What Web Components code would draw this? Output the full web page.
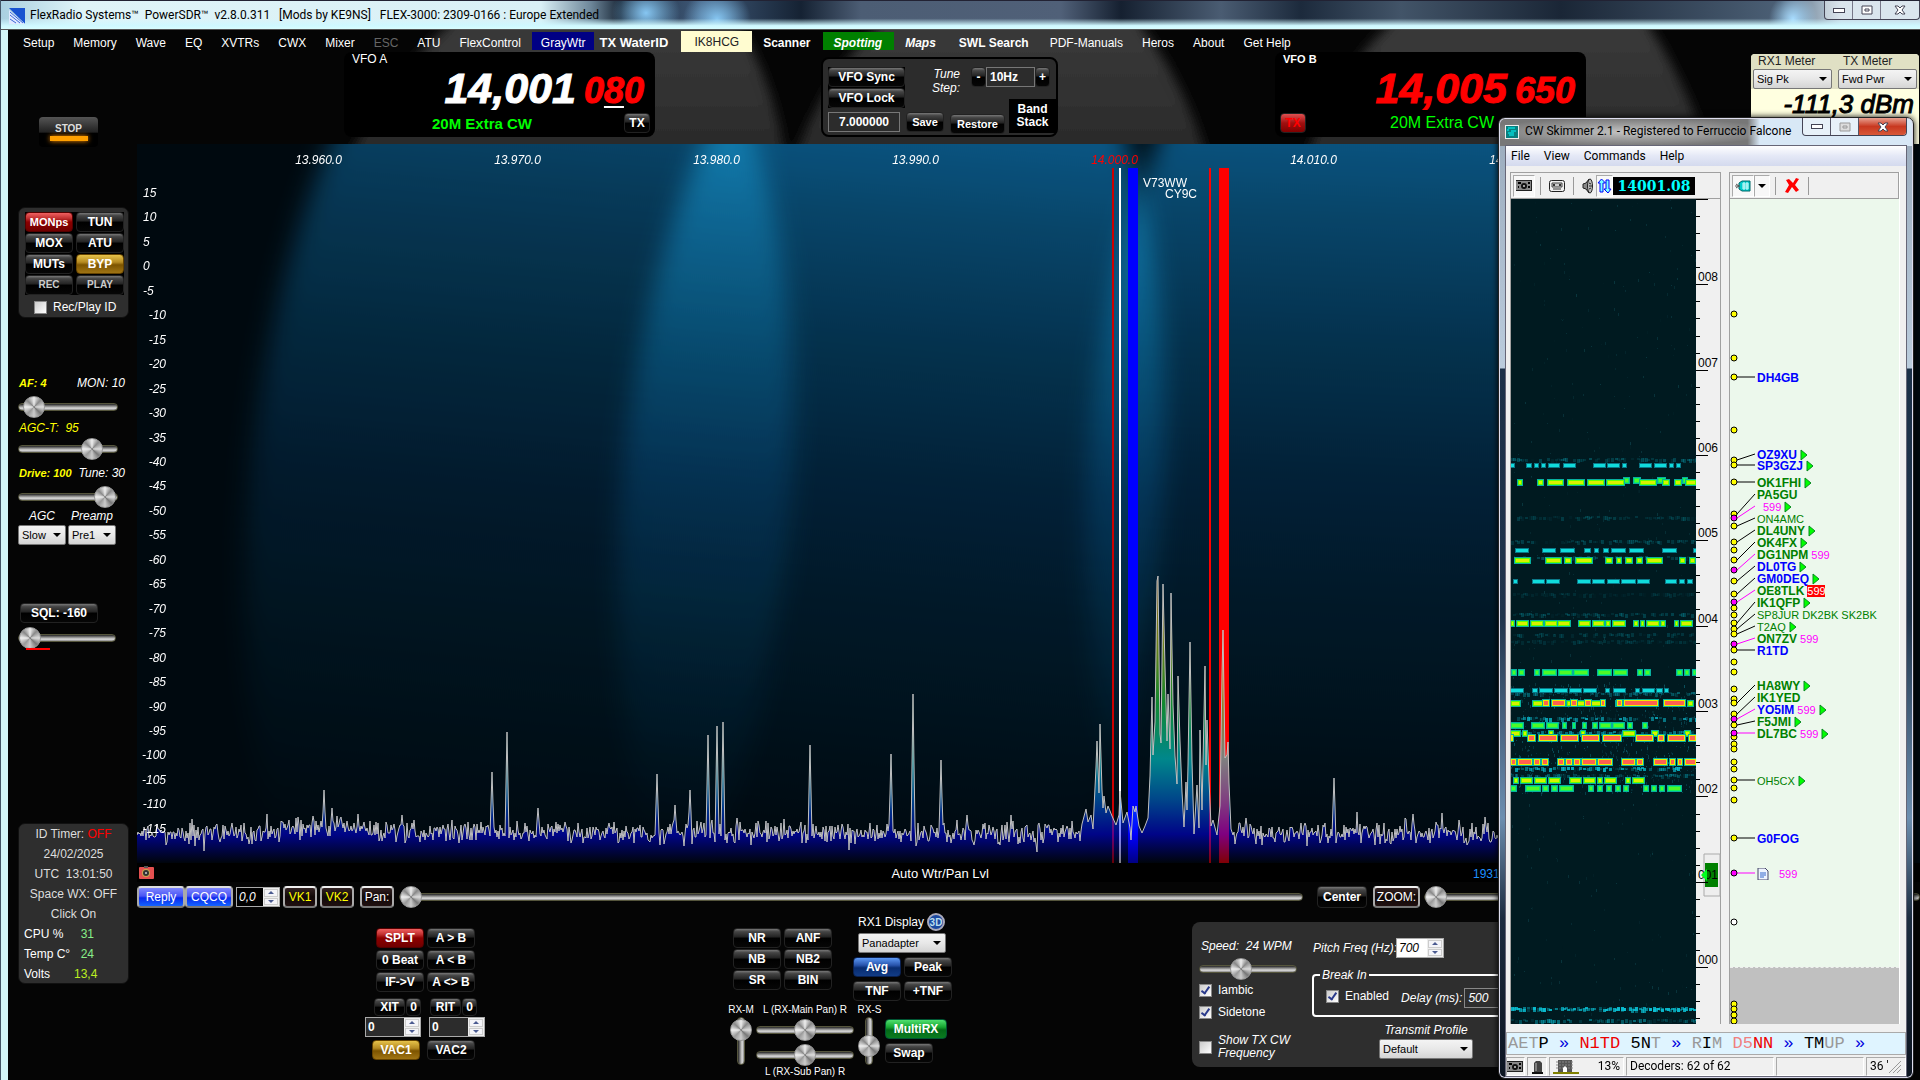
<!DOCTYPE html>
<html lang="en">
<head>
<meta charset="utf-8">
<title>PowerSDR</title>
<style>
  html, body { margin: 0; height: 100%; background: #050505; overflow: hidden; }
  body { font-family: "Liberation Sans", Arial, sans-serif; font-size: 12px; color: #fff; }
</style>
</head>
<body>
<sdr-window></sdr-window>
<cw-skimmer></cw-skimmer>

<script>
const reset = `
  * { box-sizing: border-box; }
  button, input, select { font: inherit; color: inherit; margin: 0; }
  a { color: inherit; text-decoration: none; }
  svg { display: block; }
`;

class Base extends HTMLElement {
  constructor() {
    super();
    this.attachShadow({ mode: "open" });
  }
  connectedCallback() {
    this.shadowRoot.innerHTML = `<style>${reset}${this.css}</style>${this.html}`;
    this.ready();
  }
  get css() { return ""; }
  get html() { return ""; }
  ready() {}
}

// repeatable noise for the traces
function random(seed) {
  return () => {
    seed = (seed * 1664525 + 1013904223) % 4294967296;
    return seed / 4294967296;
  };
}

/* ---------- controls ---------- */

class SdrButton extends Base {
  get css() {
    return `
      :host { display: block; width: 48px; height: 20px; flex: none; }
      button { width: 100%; height: 100%; padding: 0; border: 1px solid #222; border-radius: 4px;
        font-weight: bold; font-size: 12px; line-height: 14px; color: #fff; white-space: nowrap;
        background: linear-gradient(#777 0, #444 15%, #222 45%, #000 50%, #060606 100%); }
      :host([small]) button { font-size: 11px; }
      :host([tone=grey]) button { font-size: 10px; color: #ccc; }
      :host([tone=red]) button { background: linear-gradient(#f06060, #c03030 30%, #8c0000 50%, #700000); border-color: #500; }
      :host([tone=gold]) button { background: linear-gradient(#e6c24a, #b58a22 40%, #7c5400 55%, #a07414); border-color: #654300; }
      :host([tone=blue]) button { background: linear-gradient(#5c98f4, #2854ac 40%, #082c70 55%, #123c86); border-color: #0a2050; }
      :host([tone=green]) button { background: linear-gradient(#50e070, #16a530 40%, #046a18 55%, #0a7c20); border-color: #053; }
      :host([tone=tx]) button { color: #f00; background: linear-gradient(#e05050, #a01010 50%, #800000); }
      :host([tone=call]) button { background: linear-gradient(#7f86ff, #4a55f4 45%, #0a28ec 55%, #1464ff); border: 2px solid #bbb; border-color: #ddd #aaa #777; font-weight: normal; }
      :host([tone=key]) button { background: linear-gradient(#332222, #100808 50%, #201010); border: 2px solid #bbb; border-color: #eee #aaa #777; font-weight: normal; }
      :host([yellow]) button { color: #ff0; }
    `;
  }
  get html() { return `<button type="button"><slot></slot></button>`; }
}
customElements.define("sdr-button", SdrButton);

class SdrSlider extends Base {
  get css() {
    const knob = `-webkit-appearance: none; width: 22px; height: 22px; border-radius: 50%; border: 1px solid #999;
      background: conic-gradient(#eee, #888 12%, #ddd 25%, #777 37%, #ccc 50%, #999 62%, #eee 75%, #888 87%, #eee);`;
    return `
      :host { display: block; height: 22px; }
      input { -webkit-appearance: none; appearance: none; display: block; width: 100%; height: 22px; background: none; }
      input::-webkit-slider-runnable-track { height: 8px; border-radius: 4px; border: 1px solid #55553c;
        background: linear-gradient(#222, #777 30%, #ddd 70%, #888); }
      input::-webkit-slider-thumb { ${knob} margin-top: -8px; }
      :host([upright]) { width: 22px; height: 48px; }
      :host([upright]) input { writing-mode: vertical-lr; width: 22px; height: 100%; }
      :host([upright]) input::-webkit-slider-runnable-track { width: 8px; height: 100%;
        background: linear-gradient(90deg, #222, #777 30%, #ddd 70%, #888); }
      :host([upright]) input::-webkit-slider-thumb { margin: 0 0 0 -8px; }
    `;
  }
  get html() {
    return `<input type="range" min="0" max="100" value="${this.getAttribute("value")}" aria-label="${this.getAttribute("label")}">`;
  }
}
customElements.define("sdr-slider", SdrSlider);

class SdrSelect extends Base {
  get css() {
    return `
      :host { display: block; position: relative; height: 20px; color: #000; font-size: 11px; }
      select { -webkit-appearance: none; appearance: none; width: 100%; height: 100%; padding: 0 3px; border: 1px solid #777;
        border-radius: 2px; background: linear-gradient(#f4f4f4, #e8e8e8 50%, #d4d4d4); }
      :host::after { content: ""; position: absolute; right: 5px; top: 8px; border: 4px solid transparent; border-top-color: #000; pointer-events: none; }
    `;
  }
  get html() {
    return `<select aria-label="${this.getAttribute("label")}"><option>${this.getAttribute("value")}</option></select>`;
  }
}
customElements.define("sdr-select", SdrSelect);

class SdrSpin extends Base {
  get css() {
    return `
      :host { display: flex; height: 20px; border: 1px solid #aaa; background: #2c2c2c; }
      input { flex: 1; min-width: 0; border: 0; padding: 0 2px; background: none; font-size: 12px; }
      :host([dark]) { background: #000; font-style: italic; }
      :host([light]) { background: #fff; color: #000; font-style: italic; }
      div { display: flex; flex-direction: column; width: 16px; background: #eee; padding: 1px; gap: 1px; }
      button { flex: 1; padding: 0; border: 1px solid #ccc; background: #f4f4f8; display: grid; place-items: center; min-height: 0; }
    `;
  }
  get html() {
    return `
      <input type="text" value="${this.getAttribute("value")}" aria-label="${this.getAttribute("label")}">
      <div>
        <button type="button" aria-label="Up"><svg width="6" height="3"><path d="M0 3L3 0L6 3z" fill="#4a5a90"/></svg></button>
        <button type="button" aria-label="Down"><svg width="6" height="3"><path d="M0 0L3 3L6 0z" fill="#4a5a90"/></svg></button>
      </div>`;
  }
}
customElements.define("sdr-spin", SdrSpin);

class SdrCheck extends Base {
  get css() {
    return `
      :host { display: block; font-size: 12px; line-height: 13px; }
      label { display: flex; align-items: center; gap: 6px; }
      input { -webkit-appearance: none; appearance: none; width: 13px; height: 13px; flex: none; border: 1px solid #888;
        background: linear-gradient(135deg, #ccc, #fff); display: grid; place-items: center; }
      input:checked::after { content: ""; width: 3px; height: 7px; border: solid #2a3a8c; border-width: 0 2px 2px 0; rotate: 35deg; margin-top: -2px; }
    `;
  }
  get html() {
    return `<label><input type="checkbox" ${this.hasAttribute("on") ? "checked" : ""}><span><slot></slot></span></label>`;
  }
}
customElements.define("sdr-check", SdrCheck);

/* ---------- top of the radio window ---------- */

class SdrTitle extends Base {
  get css() {
    return `
      :host { display: flex; align-items: flex-start; height: 30px; color: #000; border-top: 1px solid #223;
        font: 12px Roboto, sans-serif;
        background:
          linear-gradient(transparent 60%, #cff8ff 85%, #d8fdff 96%, #555 97%),
          radial-gradient(ellipse 34px 30px at 716px 18px, #86c6f2, transparent),
          radial-gradient(ellipse 34px 30px at 645px 12px, #86c6f2, transparent),
          radial-gradient(ellipse 24px 26px at 1792px 18px, #a8dcff, transparent),
          linear-gradient(90deg, #a9cfe0, #dff4f8 80px, #d9f0f6 540px, #6d8699 590px, #182636 620px, #405a7a 700px, #152233 800px, #4c5d74 860px, #506078 1060px, #152030 1120px, #4a5c72 1220px, #1c2a3c 1300px, #425468 1400px, #1a2636 1560px, #4c6076 1780px, #c8d8e4 1840px); }
      svg { margin: 7px 5px 0 8px; }
      span { line-height: 28px; flex: 1; white-space: pre; }
      nav { display: flex; border: 1px solid #445; border-top: 0; border-radius: 0 0 4px 4px; background: #ffffff55; }
      button { width: 28px; height: 18px; border: 0; border-right: 1px solid #778; background: none; padding: 0; display: grid; place-items: center; }
      button svg { margin: 0; }
      button:last-child { width: 38px; border: 0; }
    `;
  }
  get html() {
    return `
      <svg width="16" height="16"><path fill="#1852d0" d="M0 0h16v16z"/><path fill="#dfe9ff" d="M0 2l16 14H0z"/><path d="M1 7l10 8M1 11l6 4M1 4l13 11" stroke="#3c68d8"/></svg>
      <span>FlexRadio Systems™  PowerSDR™  v2.8.0.311   [Mods by KE9NS]   FLEX-3000: 2309-0166 : Europe Extended</span>
      <nav>
        <button aria-label="Minimize"><svg width="12" height="5"><rect x=".5" y=".5" width="11" height="4" fill="#fff" stroke="#445"/></svg></button>
        <button aria-label="Maximize"><svg width="12" height="10"><path d="M1 1h10v8H1zM4 4h4v2H4z" fill="#fff" stroke="#445"/></svg></button>
        <button aria-label="Close"><svg width="12" height="10"><path d="M1 1h3l2 2 2-2h3L8 5l3 4H8L6 7 4 9H1l3-4z" fill="#fff" stroke="#445"/></svg></button>
      </nav>`;
  }
}
customElements.define("sdr-title", SdrTitle);

class SdrMenu extends Base {
  get css() {
    return `
      :host { display: flex; height: 22px; padding-left: 6px; }
      a { padding: 0 10px 0 9px; height: 18px; line-height: 22px; margin-top: 2px; white-space: nowrap; flex: none; }
      a.dim { color: #666; }
      a.b { font-weight: bold; font-size: 12px; padding: 0 12px 0 11px; }
      a.navy { background: #000084; margin-left: 1px; padding: 0 9px; }
      a.wide { padding: 0 5px; width: 87px; font-size: 13px; }
      a.cream { background: #fffcd0; color: #222; padding: 0 13px; height: 21px; margin-top: 1px; }
      a.green { background: #008000; }
      a.i { font-style: italic; }
    `;
  }
  get html() {
    const items = [["Setup"], ["Memory"], ["Wave"], ["EQ"], ["XVTRs"], ["CWX"], ["Mixer"], ["ESC", "dim"], ["ATU"], ["FlexControl"],
      ["GrayWtr", "navy"], ["TX WaterID", "b wide"], ["IK8HCG", "cream"], ["Scanner", "b"], ["Spotting", "b i green"], ["Maps", "b i"],
      ["SWL Search", "b"], ["PDF-Manuals"], ["Heros"], ["About"], ["Get Help"]];
    return items.map(([text, cls]) => `<a href="#" class="${cls || ""}">${text}</a>`).join("");
  }
}
customElements.define("sdr-menu", SdrMenu);

class SdrVfo extends Base {
  get css() {
    return `
      :host { display: block; width: 311px; height: 85px; border-radius: 8px; background: #000; padding: 0 11px 0 8px; flex: none; }
      .name { line-height: 14px; font-size: 12px; height: 14px; }
      .freq { display: flex; justify-content: flex-end; align-items: baseline; gap: 8px; height: 45px; line-height: 45px;
        font-weight: bold; font-style: italic; font-size: 43px; -webkit-text-stroke: 1px; }
      .freq small { font-size: 36px; color: #f00; }
      u { text-decoration-color: #fff; text-decoration-thickness: 2px; text-underline-offset: 3px; text-decoration-skip-ink: none; }
      .row { display: flex; align-items: center; margin: 1px -6px 0 80px; height: 22px; color: #0f0; font-size: 15px; font-weight: bold; }
      .row sdr-button { width: 26px; margin-left: auto; }
      :host([sub]) .name { font-weight: bold; font-size: 11px; }
      :host([sub]) .freq { color: #f00; }
      :host([sub]) .row { margin-left: -3px; font-weight: normal; font-size: 16px; gap: 84px; }
      :host([sub]) .row sdr-button { order: -1; margin-left: 0; }
    `;
  }
  get html() {
    const sub = this.hasAttribute("sub");
    return `
      <div class="name">VFO ${sub ? "B" : "A"}</div>
      <div class="freq"><span>${this.getAttribute("mhz")}</span><small>${sub ? this.getAttribute("hz") : "0<u>8</u>0"}</small></div>
      <div class="row"><span>20M Extra CW</span><sdr-button ${sub ? 'tone="tx"' : ""}>TX</sdr-button></div>`;
  }
}
customElements.define("sdr-vfo", SdrVfo);

class SdrTuning extends Base {
  get css() {
    return `
      :host { display: block; width: 237px; height: 80px; margin-top: 5px; padding: 8px 0 0 5px; border: 2px solid #000; border-radius: 8px; background: #2c2c2c; flex: none; }
      .top, .low { display: flex; }
      .stack { display: grid; gap: 1px; background: #000; }
      .stack sdr-button { width: 77px; }
      label { font-style: italic; width: 29px; line-height: 14px; text-align: right; margin-left: 26px; }
      .step { display: flex; margin-left: 11px; height: 20px; }
      .step sdr-button { width: 15px; }
      input { border: 1px solid #777; background: #2c2c2c; font-weight: bold; padding: 0 3px; width: 49px; height: 20px; }
      .low { margin-top: 4px; align-items: flex-start; }
      .low input { width: 72px; text-align: center; }
      .low sdr-button { margin-left: 6px; width: 38px; }
      .low sdr-button + sdr-button { width: 55px; margin-top: 2px; }
      .low .band { border: 0; padding: 0; width: 48px; height: 34px; margin: -13px 0 0 4px; background: #000; font-weight: bold; line-height: 13px; }
    `;
  }
  get html() {
    return `
      <div class="top">
        <div class="stack"><sdr-button>VFO Sync</sdr-button><sdr-button>VFO Lock</sdr-button></div>
        <label for="step">Tune Step:</label>
        <div class="step"><sdr-button>-</sdr-button><input id="step" value="10Hz"><sdr-button>+</sdr-button></div>
      </div>
      <div class="low">
        <input value="7.000000" aria-label="Saved frequency"><sdr-button small>Save</sdr-button><sdr-button small>Restore</sdr-button>
        <button class="band">Band Stack</button>
      </div>`;
  }
}
customElements.define("sdr-tuning", SdrTuning);

class SdrMeter extends Base {
  get css() {
    return `
      :host { display: block; width: 168px; height: 145px; border-radius: 4px; margin: 2px 0 0 auto; background: #ffffe0; color: #222; flex: none; overflow: hidden; }
      .top { display: flex; gap: 6px; padding: 0 2px; height: 35px; background: #e0e0c4; }
      .top div { flex: 1; }
      span { display: block; line-height: 15px; padding-left: 5px; }
      p { margin: 0; text-align: right; padding-right: 5px; color: #000; font-size: 26px; line-height: 30px; font-style: italic; -webkit-text-stroke: 1px #000; }
    `;
  }
  get html() {
    return `
      <div class="top">
        <div><span>RX1 Meter</span><sdr-select label="RX1 Meter" value="Sig Pk"></sdr-select></div>
        <div><span>TX Meter</span><sdr-select label="TX Meter" value="Fwd Pwr"></sdr-select></div>
      </div>
      <p>-111,3 dBm</p>`;
  }
}
customElements.define("sdr-meter", SdrMeter);

/* ---------- left column ---------- */

class SdrSidebar extends Base {
  get css() {
    return `
      :host { display: flex; flex-direction: column; width: 129px; padding-left: 10px; font-size: 12px; }
      .stop { width: 59px; height: 30px; margin: -27px 0 0 21px; padding: 0; border: 0; border-radius: 4px; background: linear-gradient(#555, #222 50%, #000 55%); color: #ddd; font-weight: bold; font-size: 10px; }
      .stop i { display: block; height: 5px; width: 38px; margin: 2px auto 0; background: #ffa000; box-shadow: 0 0 5px #ff9000; }
      .panel { width: 111px; border-radius: 7px; background: #2e2e2e; border: 1px solid #111; }
      .keys { margin-top: 60px; height: 111px; padding: 4px 4px 0 6px; }
      .grid { display: grid; grid-template-columns: 48px 48px; gap: 1px 3px; background: #000; }
      .keys sdr-check { margin: 6px 0 0 9px; }
      .levels { margin-top: 58px; width: 100px; font-style: italic; }
      .levels p { display: flex; justify-content: space-between; margin: 0 0 0 1px; height: 14px; line-height: 14px; white-space: nowrap; width: 106px; }
      .levels sdr-slider { margin: 6px 0 3px; }
      .levels sdr-slider.mid { margin: 3px 0 6px; }
      .levels sdr-slider.last { margin: 6px 0 0; }
      b, em { color: #ff0; }
      b { font-size: 11px; }
      .drop { display: flex; gap: 2px; font-size: 12px; }
      .drop div { width: 48px; text-align: center; line-height: 17px; }
      .drop sdr-select { font-style: normal; }
      .sql { margin: 58px 0 0 2px; }
      .sql sdr-button { width: 78px; }
      .sql + sdr-slider { width: 98px; margin-top: 4px; }
      hr { width: 24px; height: 2px; background: #f00; border: 0; margin: -1px 0 0 8px; }
      .info { margin-top: 173px; height: 161px; text-align: center; line-height: 20px; font-size: 12px; padding-top: 0; }
      .info div { color: #ddd; white-space: nowrap; }
      .info dl { display: grid; grid-template-columns: 50px 1fr; margin: 0 0 0 5px; text-align: left; }
      .info dd { margin: 0; color: #8e8; }
      .info .hot { color: #be2; }
      .red { color: #f00; }
    `;
  }
  get html() {
    return `
      <button class="stop">STOP<i></i></button>
      <div class="panel keys">
        <div class="grid">
          <sdr-button tone="red" small>MONps</sdr-button><sdr-button>TUN</sdr-button>
          <sdr-button>MOX</sdr-button><sdr-button>ATU</sdr-button>
          <sdr-button>MUTs</sdr-button><sdr-button tone="gold">BYP</sdr-button>
          <sdr-button tone="grey">REC</sdr-button><sdr-button tone="grey">PLAY</sdr-button>
        </div>
        <sdr-check>Rec/Play ID</sdr-check>
      </div>
      <div class="levels">
        <p><b>AF: 4</b><span>MON: 10</span></p><sdr-slider label="AF" value="5"></sdr-slider>
        <p><em>AGC-T:&nbsp; 95</em></p><sdr-slider class="mid" label="AGC-T" value="81"></sdr-slider>
        <p><b>Drive: 100</b><span>Tune: 30</span></p><sdr-slider class="last" label="Drive" value="99"></sdr-slider>
        <div class="drop">
          <div>AGC<sdr-select label="AGC" value="Slow"></sdr-select></div>
          <div>Preamp<sdr-select label="Preamp" value="Pre1"></sdr-select></div>
        </div>
      </div>
      <div class="sql"><sdr-button>SQL: -160</sdr-button></div>
      <sdr-slider label="Squelch" value="0"></sdr-slider>
      <hr>
      <div class="panel info">
        <div>ID Timer: <span class="red">OFF</span></div><div>24/02/2025</div><div>UTC&nbsp; 13:01:50</div>
        <div>Space WX: OFF</div><div>Click On</div>
        <dl><dt>CPU %</dt><dd>&nbsp; 31</dd><dt>Temp C°</dt><dd>&nbsp; 24</dd><dt>Volts</dt><dd class="hot">13,4</dd></dl>
      </div>`;
  }
}
customElements.define("sdr-sidebar", SdrSidebar);

/* ---------- panadapter ---------- */

const PEAKS = [[324, 790], [332, 808], [402, 815], [492, 772], [507, 732], [538, 808], [657, 774], [675, 805], [690, 790], [708, 735],
  [717, 726], [723, 722], [737, 818], [810, 745], [891, 754], [913, 694], [941, 760], [967, 815], [1246, 818], [1334, 778], [1413, 814]];
const CLUSTER = [[1082, 824], [1086, 809], [1088, 822], [1091, 815], [1093, 829], [1096, 767], [1097, 741], [1099, 793], [1100, 724], [1102, 790],
  [1103, 808], [1104, 796], [1106, 813], [1108, 806], [1112, 816], [1116, 825], [1119, 815], [1120, 791], [1123, 823], [1127, 812],
  [1130, 828], [1131, 840], [1133, 806], [1135, 812], [1136, 806], [1139, 826], [1142, 833], [1145, 826], [1148, 818], [1150, 776], [1152, 697], [1153, 755],
  [1155, 722], [1157, 581], [1158, 576], [1160, 734], [1161, 743], [1163, 584], [1165, 667], [1167, 741], [1168, 694], [1170, 749],
  [1171, 593], [1173, 705], [1175, 756], [1177, 784], [1178, 676], [1180, 741], [1182, 792], [1184, 827], [1186, 782], [1187, 810],
  [1188, 765], [1190, 642], [1192, 761], [1194, 834], [1197, 785], [1199, 828], [1200, 730], [1202, 810], [1205, 666], [1206, 765],
  [1207, 720], [1209, 780], [1211, 826], [1213, 820], [1217, 835], [1220, 806], [1222, 675], [1223, 630], [1225, 758], [1227, 755],
  [1228, 742], [1229, 783], [1231, 829], [1233, 835]];

class SdrPanadapter extends Base {
  get css() {
    return `
      :host { display: block; position: relative; height: 722px; overflow: hidden; background: #00090f; font-style: italic; font-size: 12px; isolation: isolate; }
      .beam { position: absolute; top: -220px; width: 540px; height: 1152px; border-radius: 50%; filter: blur(12px); mix-blend-mode: screen; rotate: 5deg;
        background: linear-gradient(#0a507c 200px, #083e60 290px, #042a42 420px, #02182a 560px, #010f18 700px, #00070c 820px, #000 920px); }
      .a { left: 112px; opacity: .75; }
      .b { left: 484px; }
      .c { left: 950px; width: 560px; rotate: 2deg; }
      svg { position: absolute; left: 0; top: 0; }
      .freq { position: relative; display: flex; padding: 9px 0 0 82px; }
      .freq span { width: 199px; flex: none; text-align: center; line-height: 14px; }
      .freq .edge { color: #f00; }
      .db { position: relative; display: flex; flex-direction: column; justify-content: space-between; width: 31px; margin-top: 19px; height: 650px; padding-right: 2px; }
      .db span { line-height: 14px; text-align: right; height: 14px; }
      .db .pos { text-align: left; padding-left: 6px; }
      .spot { position: absolute; font-style: normal; line-height: 11px; left: 1006px; top: 34px; }
      .spot span { display: block; padding-left: 22px; }
    `;
  }
  get html() {
    const freqs = ["13.960.0", "13.970.0", "13.980.0", "13.990.0", "14.000.0", "14.010.0", "14.020.0"];
    let db = "";
    for (let v = 15; v >= -115; v -= 5) db += `<span class="${v > -10 ? "pos" : ""}">${v}</span>`;
    return `
      <div class="beam a"></div><div class="beam b"></div><div class="beam c"></div>
      <svg width="1783" height="722">
        <defs>
          <linearGradient id="heat" x1="0" y1="430" x2="0" y2="719" gradientUnits="userSpaceOnUse">
            <stop offset="0" stop-color="#ff8000"/><stop offset=".22" stop-color="#ffff00" stop-opacity=".9"/><stop offset=".45" stop-color="#22ff44"/><stop offset=".64" stop-color="#00ffff"/>
            <stop offset=".78" stop-color="#0080ff"/><stop offset=".9" stop-color="#0000ff"/><stop offset="1" stop-color="#000008"/>
          </linearGradient>
        </defs>
        <path fill="#000" d="M0 719h1783v3H0z"/>
        <path fill="#c00" d="M975 24h2v695h-2z"/><path fill="#fff" d="M982 24h2v695h-2z"/><path fill="#00f" d="M991 24h10v695h-10z"/>
        <path fill="#f00" d="M1072 24h2v695h-2zM1082 24h10v695h-10z"/>
        <path id="fill" fill="url(#heat)" fill-opacity=".5"/>
        <path id="line" fill="none" stroke="#c0c0c0"/>
      </svg>
      <div class="freq">${freqs.map(f => `<span class="${f == "14.000.0" ? "edge" : ""}">${f}</span>`).join("")}</div>
      <div class="db">${db}</div>
      <div class="spot">V73WW<span>CY9C</span></div>`;
  }
  ready() {
    const rnd = random(7);
    const pts = [];
    for (let x = 137; x < 1912; x++) {
      if (x >= 1082 && x <= 1233) continue;
      let hump = 8 * Math.exp(-(((x - 325) / 40) ** 2));
      let y = 833 - hump + (rnd() + rnd() - 1) * 13;
      if (rnd() < .08) y -= rnd() * 14;
      if (rnd() < .04) y += rnd() * 12;
      for (const [px, py] of PEAKS) {
        if (x == px) y = py;
        if (Math.abs(x - px) == 1) y = (py + 834) / 2;
      }
      pts.push([x, y]);
    }
    CLUSTER.forEach(p => pts.push(p));
    pts.sort((a, b) => a[0] - b[0]);
    const d = pts.map(([x, y]) => `${x - 137} ${Math.round(y - 144)}`).join("L");
    this.shadowRoot.querySelector("#line").setAttribute("d", "M" + d);
    this.shadowRoot.querySelector("#fill").setAttribute("d", `M0 719L${d}V719z`);
  }
}
customElements.define("sdr-panadapter", SdrPanadapter);

/* ---------- rows under the panadapter ---------- */

class SdrStrip extends Base {
  get css() {
    return `
      :host { display: block; }
      .info { display: grid; grid-template-columns: 600px 406px 1fr; height: 16px; background: #000; line-height: 16px; font-size: 13px; }
      .info span { color: #1e90ff; padding-left: 330px; font-size: 12px; }
      .info b { font-weight: normal; text-align: right; }
      .info svg { margin: 0 2px; }
      .info b { grid-column: 2; padding-right: 154px; white-space: nowrap; }
      .row { display: flex; align-items: center; height: 30px; }
      .row sdr-button { height: 22px; }
      .call { width: 48px; }
      sdr-spin { width: 44px; margin: 0 3px 0 3px; }
      .key { width: 34px; margin-right: 3px; }
      .pan { margin-left: 3px; width: 34px; margin-right: 5px; }
      .long { width: 904px; }
      .center { width: 50px; margin: 0 6px 0 14px; }
      .zoom { width: 47px; margin-right: 4px; }
      .rest { flex: 1; }
    `;
  }
  get html() {
    return `
      <div class="info">
        <svg width="16" height="13"><rect y="1" width="15" height="12" rx="1" fill="#e45050"/><circle cx="7" cy="7" r="4" fill="#c8a84c"/><circle cx="7" cy="7" r="3" fill="#333"/><circle cx="7" cy="7" r="1" fill="#ccc"/><path d="M5 0h4v2H5z" fill="#555"/></svg>
        <b>Auto Wtr/Pan Lvl</b><span>1931</span>
      </div>
      <div class="row">
        <sdr-button class="call" tone="call">Reply</sdr-button><sdr-button class="call" tone="call">CQCQ</sdr-button>
        <sdr-spin dark value="0,0" label="Offset"></sdr-spin>
        <sdr-button class="key" tone="key" yellow>VK1</sdr-button><sdr-button class="key" tone="key" yellow>VK2</sdr-button>
        <sdr-button class="pan" tone="key">Pan:</sdr-button><sdr-slider class="long" label="Pan" value="0"></sdr-slider>
        <sdr-button class="center">Center</sdr-button><sdr-button class="zoom" tone="key">ZOOM:</sdr-button>
        <sdr-slider class="rest" label="Zoom" value="0"></sdr-slider>
      </div>`;
  }
}
customElements.define("sdr-strip", SdrStrip);

class SdrVfoKeys extends Base {
  get css() {
    return `
      :host { display: block; width: 120px; }
      .grid { display: grid; grid-template-columns: 48px 48px; gap: 2px 3px; margin-left: 11px; }
      .inc { display: flex; gap: 1px; margin: 6px 0 0 9px; }
      .inc sdr-button { width: 31px; height: 18px; }
      .inc .n { width: 15px; margin-right: 8px; }
      .spins { display: flex; gap: 8px; margin: 1px 0 3px; }
      .spins sdr-spin { width: 56px; font-weight: bold; }
      .vac { display: flex; gap: 7px; margin-left: 7px; }
    `;
  }
  get html() {
    return `
      <div class="grid">
        <sdr-button tone="red">SPLT</sdr-button><sdr-button>A &gt; B</sdr-button>
        <sdr-button>0 Beat</sdr-button><sdr-button>A &lt; B</sdr-button>
        <sdr-button>IF-&gt;V</sdr-button><sdr-button>A &lt;&gt; B</sdr-button>
      </div>
      <div class="inc"><sdr-button>XIT</sdr-button><sdr-button class="n">0</sdr-button><sdr-button>RIT</sdr-button><sdr-button class="n">0</sdr-button></div>
      <div class="spins"><sdr-spin value="0" label="XIT"></sdr-spin><sdr-spin value="0" label="RIT"></sdr-spin></div>
      <div class="vac"><sdr-button tone="gold">VAC1</sdr-button><sdr-button>VAC2</sdr-button></div>`;
  }
}
customElements.define("sdr-vfo-keys", SdrVfoKeys);

class SdrDsp extends Base {
  get css() {
    return `
      :host { display: grid; grid-template-columns: 125px 100px; font-size: 10px; }
      .grid { display: grid; grid-template-columns: 48px 48px; gap: 1px 3px; margin: 14px 0 0 5px; align-content: start; }
      .disp { font-size: 12px; padding-left: 5px; }
      .disp p { margin: 0 0 3px; display: flex; gap: 3px; align-items: center; height: 16px; white-space: nowrap; }
      .disp sdr-select { width: 88px; }
      .pair { display: grid; grid-template-columns: 48px 48px; gap: 4px 3px; margin: 4px 0 0 -5px; }
      .mix { grid-column: 1 / 3; display: grid; grid-template-columns: 26px 102px 27px auto; margin-top: 3px; }
      .mix label, .mix span { line-height: 12px; white-space: nowrap; text-align: center; display: block; }
      .mix sdr-slider { margin: 1px 2px 0; }
      .h sdr-slider { margin: 3px 0 0 2px; width: 98px; }
      .h sdr-slider + sdr-slider { margin-bottom: 0; }
      .keys { padding: 15px 0 0 2px; display: grid; gap: 4px; align-content: start; }
      .keys sdr-button:first-child { width: 62px; }
    `;
  }
  get html() {
    return `
      <div class="grid">
        <sdr-button>NR</sdr-button><sdr-button>ANF</sdr-button><sdr-button>NB</sdr-button>
        <sdr-button>NB2</sdr-button><sdr-button>SR</sdr-button><sdr-button>BIN</sdr-button>
      </div>
      <div class="disp">
        <p>RX1 Display <svg width="18" height="18"><circle cx="9" cy="9" r="8" fill="#1c4aa0" stroke="#aab" stroke-width="2"/><text x="9" y="13" font-size="10" font-weight="bold" fill="#bde" text-anchor="middle">3D</text></svg></p>
        <sdr-select label="RX1 Display" value="Panadapter"></sdr-select>
        <div class="pair"><sdr-button tone="blue">Avg</sdr-button><sdr-button>Peak</sdr-button><sdr-button>TNF</sdr-button><sdr-button>+TNF</sdr-button></div>
      </div>
      <div class="mix">
        <div><span>RX-M</span><sdr-slider upright label="RX-M" value="5"></sdr-slider></div>
        <div class="h"><span>L (RX-Main Pan) R</span><sdr-slider label="Main pan" value="50"></sdr-slider><sdr-slider label="Sub pan" value="50"></sdr-slider><span>L (RX-Sub Pan) R</span></div>
        <div><span>RX-S</span><sdr-slider upright label="RX-S" value="70"></sdr-slider></div>
        <div class="keys"><sdr-button tone="green">MultiRX</sdr-button><sdr-button>Swap</sdr-button></div>
      </div>`;
  }
}
customElements.define("sdr-dsp", SdrDsp);

class SdrCw extends Base {
  get css() {
    return `
      :host { display: grid; grid-template-columns: 110px 1fr; height: 145px; width: 720px; border-radius: 8px; background: #2e2e2e; padding: 16px 0 0 7px; font-size: 12px; }
      i { display: block; line-height: 16px; padding-left: 2px; }
      sdr-slider { width: 98px; margin: 4px 0 4px; }
      sdr-check { margin-bottom: 9px; }
      .show { margin-top: 15px; font-style: italic; }
      .pitch { display: flex; align-items: center; font-style: italic; padding-left: 4px; }
      .pitch sdr-spin { width: 48px; margin-left: -11px; }
      fieldset { margin: 10px 0 0 3px; height: 49px; width: 300px; border: 2px solid #fff; border-radius: 4px; padding: 6px 0 0 12px; display: flex; gap: 12px; align-items: flex-start; }
      legend { font-style: italic; line-height: 14px; margin-left: -6px; padding: 0 2px; }
      fieldset label { font-style: italic; display: flex; align-items: center; gap: 2px; margin-top: 0; white-space: nowrap; }
      fieldset sdr-check { margin-top: 2px; }
      fieldset input { width: 46px; height: 20px; background: #2e2e2e; border: 1px solid #888; font-style: italic; padding: 0 3px; }
      .tx { width: 94px; margin: 5px 0 0 70px; text-align: center; font-style: italic; }
      .tx span { display: block; line-height: 17px; }
      .tx sdr-select { font-style: normal; }
    `;
  }
  get html() {
    return `
      <div>
        <i>Speed:&nbsp; 24 WPM</i><sdr-slider label="Speed" value="40"></sdr-slider>
        <sdr-check on>Iambic</sdr-check><sdr-check on>Sidetone</sdr-check>
        <sdr-check class="show">Show TX CW<br>Frequency</sdr-check>
      </div>
      <div>
        <div class="pitch"><span>Pitch Freq (Hz):&nbsp;&nbsp;&nbsp;</span><sdr-spin light value="700" label="Pitch"></sdr-spin></div>
        <fieldset><legend>Break In</legend><sdr-check on>Enabled</sdr-check><label>Delay (ms): <input value="500"></label></fieldset>
        <div class="tx"><span>Transmit Profile</span><sdr-select label="Transmit Profile" value="Default"></sdr-select></div>
      </div>`;
  }
}
customElements.define("sdr-cw", SdrCw);

class SdrWindow extends Base {
  get css() {
    return `
      :host { display: block; height: 100vh; overflow: hidden; border-left: 1px solid #456; background: #050505; }
      .body { border-left: 7px solid #d4f6f8; position: relative; height: 100%; }
      .back { position: absolute; left: 0; top: 0; }
      .head { display: flex; align-items: flex-start; height: 92px; position: relative; padding: 0 1px 0 336px; }
      .head sdr-tuning { margin-left: 166px; }
      .head sdr-vfo[sub] { margin-left: 217px; }
      sdr-menu { position: relative; }
      .main { position: relative; display: grid; grid-template-columns: 129px 1fr; }
      .low { display: flex; align-items: flex-start; padding: 0 0 0 228px; }
      sdr-vfo-keys { margin: 16px 243px 0 0; }
      sdr-dsp { margin-top: 2px; }
      sdr-cw { margin: 10px 0 0 239px; flex: none; }
      .col { min-width: 0; }
    `;
  }
  get html() {
    return `
      <sdr-title></sdr-title>
      <div class="body">
        <svg class="back" width="1912" height="114">
          <defs><linearGradient id="g" x1="0" y1="0" x2="0" y2="1"><stop offset="0" stop-color="#3c3c3c"/><stop offset="1" stop-color="#262626"/></linearGradient>
          <filter id="f"><feGaussianBlur stdDeviation="6"/></filter></defs>
          <g fill="url(#g)" filter="url(#f)">
            <path d="M460-20Q380 40 330 150H780Q770 50 720-20z"/><path d="M890-20Q820 30 778 150H1205Q1180 50 1120-20z"/><path d="M1400-20Q1330 30 1290 150H1710Q1680 50 1630-20z"/>
          </g>
        </svg>
        <sdr-menu></sdr-menu>
        <div class="head">
          <sdr-vfo mhz="14,001"></sdr-vfo>
          <sdr-tuning></sdr-tuning>
          <sdr-vfo sub mhz="14,005" hz="650"></sdr-vfo>
          <sdr-meter></sdr-meter>
        </div>
        <div class="main">
          <sdr-sidebar></sdr-sidebar>
          <div class="col">
            <sdr-panadapter></sdr-panadapter>
            <sdr-strip></sdr-strip>
            <div class="low"><sdr-vfo-keys></sdr-vfo-keys><sdr-dsp></sdr-dsp><sdr-cw></sdr-cw></div>
          </div>
        </div>
      </div>`;
  }
}
customElements.define("sdr-window", SdrWindow);

/* ---------- CW Skimmer ---------- */

// each signal: y, kind, dash start/end pairs
const SIGNALS = [
  [465, "c", "0-3,16-20,24-27,31-34,38-48,53-64,83-94,97-108,112-115,129-140,144-155,159-162,166-169"],
  [480, "g", "113-118,123-129,147-154,172-176"],
  [482, "y", "7-11,27-32,37-52,57-73,77-93,96-113,129-145,152-158,164-170,175-185"],
  [550, "c", "5-17,32-44,50-63,74-79,84-87,93-97,101-114,119-132,152-165,183-185"],
  [560, "y", "4-19,35-50,54-60,65-81,95-101,106-110,115-121,126-131,136-151,169-174,179-184"],
  [581, "c", "3-6,22-33,36-48,67-79,82-93,97-108,111-124,127-138,155-165,169-173,177-181"],
  [623, "y", "0-3,6-17,20-32,34-46,47-59,68-79,82-93,95-99,102-114,123-127,130-133,136-148,150-154,164-167,170-181"],
  [672, "g", "1-5,8-13,24-28,32-45,48-61,63-77,87-100,103-116,127-131,134-139,166-171,174-178,182-185"],
  [690, "c", "0-12,22-26,29-41,44-56,59-70,73-85,95-98,103-114,125-128,132-143,146-151,154-157"],
  [703, "y", "0-9,22-36,56-93,105-111,177-182"],
  [703, "r", "32-38,41-54,60-66,74-80,90-94,106-111,113-147,153-174"],
  [725, "g", "0-12,21-33,36-47,52-55,62-64,72-75,82-86,89-100,102-113,117-121,132-136"],
  [733, "y", "0-9,12-16,38-42,70-74,112-124,141-147,174-179"],
  [738, "r", "0-2,17-24,28-46,50-67,71-88,92-110,125-142,147-153,157-174,178-185"],
  [762, "r", "0-5,7-21,23-29,31-37,47-53,55-61,63-69,71-85,87-101,111-124,126-132,143-156,159-164,167-171,174-185"],
  [780, "y", "3-7,10-21,24-35,38-49,59-70,73-84,87-91,94-105,115-119,122-133"],
  [788, "g", "0-5,15-29,32-37,41-46,49-62,78-82,87-91,96-100,105-109,113-117,133-137,141-145,149-153,157-170"]
];
const FAINT = [[460, .3], [518, .2], [542, .25], [558, .3], [595, .12], [615, .25], [635, .2], [642, .15], [694, .4], [719, .8], [733, .6], [769, .9], [776, .4], [1009, 1], [1010, 1], [1021, .5]];

class CwWaterfall extends Base {
  get css() { return `:host { display: block; } canvas { display: block; }`; }
  get html() { return `<canvas width="185" height="825"></canvas>`; }
  ready() {
    const g = this.shadowRoot.querySelector("canvas").getContext("2d");
    const rnd = random(21);
    g.fillStyle = "#001a20";
    g.fillRect(0, 0, 185, 825);
    for (let i = 0; i < 420; i++) {
      g.fillStyle = `rgba(20,90,100,${rnd() * .45})`;
      g.fillRect(rnd() * 185 | 0, rnd() * 825 | 0, 1, 1 + rnd() * 3 | 0);
    }
    for (let i = 0; i < 700; i++) {
      g.fillStyle = `rgba(20,130,150,${rnd() * .5})`;
      g.fillRect(rnd() * 185 | 0, 485 + rnd() * 110 | 0, 1, 1 + rnd() * 3 | 0);
    }
    for (const [y, a] of FAINT) {
      for (let x = 0; x < 185; x += 2) {
        if (rnd() < .35) continue;
        g.fillStyle = `rgba(10,190,210,${a * rnd()})`;
        g.fillRect(x, y - 200 - (rnd() * 2 | 0), 3, 2 + rnd() * 3 | 0);
      }
    }
    for (const [y, kind, dashes] of SIGNALS) {
      const h = { c: 3, g: 5, y: 5, r: 6 }[kind];
      for (const dash of dashes.split(",")) {
        const [a, b] = dash.split("-").map(Number);
        const layer = (colour, pad) => {
          g.fillStyle = colour;
          g.fillRect(a - pad, y - 199 - (h >> 1) - pad, b - a + pad * 2, h + pad * 2);
        };
        layer(kind == "c" ? "#0a7888" : "#08b0a0", 1);
        layer({ c: "#10dcdc", g: "#10f060", y: "#60ff00", r: "#e8f000" }[kind], 0);
        if (kind != "c") layer({ g: "#50f828", y: "#d8f000", r: "#ff6050" }[kind], -1);
      }
    }
  }
}
customElements.define("cw-waterfall", CwWaterfall);

class CwScale extends Base {
  get css() { return `:host { display: block; } text { font: 12px "Liberation Sans", sans-serif; }`; }
  get html() {
    let ticks = "";
    for (let i = 0; i < 49; i++) {
      ticks += `M0 ${Math.round(i * 17.07)}h${i % 5 ? 4 : 12}v1h-${i % 5 ? 4 : 12}z`;
    }
    let labels = "";
    for (let i = 1; i <= 9; i++) labels += `<text x="2" y="${Math.round(i * 85.33) - 3}">00${9 - i}</text>`;
    return `
      <svg width="25" height="825">
        <path d="M8 655h16v42H8z" fill="#eee" stroke="#aaa"/><path d="M9 664h13v24H9z" fill="#008000"/>
        <path d="${ticks}" fill="#000"/>${labels}
        <path d="M5 676l6-6v12z" fill="#00ff20"/>
      </svg>`;
  }
}
customElements.define("cw-scale", CwScale);

// label y, dot y, call, colour, report, marker
const CALLS = [
  [377, 377, "DH4GB", "b"], [454, 460, "OZ9XU", "b", "", 1], [465, 465, "SP3GZJ", "b", "", 1], [482, 482, "OK1FHI", "g", "", 1],
  [494, 514, "PA5GU", "g"], [506, 518, "", "g", "599", 1], [518, 526, "ON4AMC", "t"], [530, 542, "DL4UNY", "g", "", 1],
  [542, 560, "OK4FX", "g", "", 1], [554, 570, "DG1NPM", "g", "599"], [566, 581, "DL0TG", "b", "", 1], [578, 594, "GM0DEQ", "b", "", 1],
  [590, 602, "OE8TLK", "g", "hot"], [602, 623, "IK1QFP", "g", "", 1], [614, 629, "SP8JUR DK2BK SK2BK", "t"], [626, 634, "T2AQ", "t", "", 1],
  [638, 644, "ON7ZV", "g", "599"], [650, 650, "R1TD", "b"], [685, 703, "HA8WY", "g", "", 1], [697, 714, "IK1YED", "g"],
  [709, 719, "YO5IM", "b", "599", 1], [721, 725, "F5JMI", "g", "", 1], [733, 733, "DL7BC", "g", "599", 1], [780, 780, "OH5CX", "t", "", 1],
  [838, 838, "G0FOG", "b"], [873, 873, "doc", "g", "599"]
];
const DOTS = [314, 358, 430, 550, 608, 615, 662, 672, 689, 699, 737, 744, 749, 762, 769, 788, 800, 1004, 1009, 1015, 1021];

class CwCalls extends Base {
  get css() {
    return `
      :host { display: block; position: relative; background: #ecf8ec; height: 825px; font-size: 11px; }
      .lines { position: absolute; left: 0; top: 0; }
      .void { position: absolute; left: 0; right: 0; top: 768px; bottom: 0; background: #c0c0c0; border-top: 1px dashed #eee; }
      .call { position: absolute; left: 27px; display: flex; align-items: center; gap: 3px; height: 12px; line-height: 12px; white-space: nowrap; }
      .b { color: #00f; font-weight: bold; font-size: 12px; }
      .g { color: #008000; font-weight: bold; font-size: 12px; }
      .t { color: #008000; }
      .rst { color: #f0f; }
      .hot { background: #f00; color: #fff; width: 18px; overflow: hidden; }
    `;
  }
  get html() {
    let lines = "", dots = "", calls = "";
    DOTS.forEach(y => dots += `<circle cx="4" cy="${y - 199}" r="3" fill="#ff0" stroke="#000"/>`);
    for (const [y, dot, call, tone, rst, mark] of CALLS) {
      const pink = rst ? "#f0f" : "";
      lines += `<path d="M7 ${dot - 199}L25 ${y - 199}" stroke="${pink || "#000"}"/>`;
      dots += `<circle cx="4" cy="${dot - 199}" r="3" fill="${pink || "#ff0"}" stroke="#000"/>`;
      const name = call == "doc"
        ? `<svg width="19" height="12"><path d="M1 0h7l3 3v9H1z" fill="#eef4ff" stroke="#446"/><path d="M3 5h6M3 7h6M3 9h4" stroke="#36c"/></svg>`
        : call ? `<span class="${tone}">${call}</span>` : `<span style="width: 3px"></span>`;
      const report = rst ? `<span class="${rst == "hot" ? "hot" : "rst"}">599</span>` : "";
      const arrow = mark ? `<svg width="8" height="12"><path d="M1 1l6 5-6 5z" fill="#0f0" stroke="#088a20"/></svg>` : "";
      calls += `<div class="call" style="top: ${y - 204}px">${name}${report}${arrow}</div>`;
    }
    return `<div class="void"></div><svg class="lines" width="30" height="825">${lines}${dots}<circle cx="4" cy="723" r="3" fill="#fff" stroke="#000"/></svg>${calls}`;
  }
}
customElements.define("cw-calls", CwCalls);

class CwSkimmer extends Base {
  get css() {
    return `
      :host { box-sizing: border-box; position: absolute; right: 6px; top: 117px; width: 416px; bottom: 1px; display: flex; flex-direction: column; color: #000;
        border: 1px solid #222; border-radius: 7px; padding: 0 6px 4px; box-shadow: inset 0 0 0 1px #dde, 0 0 6px #000; overflow: hidden;
        background: linear-gradient(90deg, transparent 60%, #d8e8f6 63%) top / 100% 28px no-repeat,
          radial-gradient(ellipse 150px 14px at 130px 14px, #c4c4c4, #777) top / 100% 28px no-repeat,
          linear-gradient(#9ab 0, #bcd 250px, #1c3048 251px, #20344c 500px, #6d8fb0 700px, #1c2c40 800px, #0c1420); }
      .title { display: flex; height: 27px; font: 12px Roboto, sans-serif; flex: none; }
      .title > svg { margin: 7px 6px 0 0; }
      .title span { line-height: 26px; flex: 1; white-space: nowrap; }
      .title nav { display: flex; height: 18px; border: 1px solid #445; border-top: 0; border-radius: 0 0 4px 4px; overflow: hidden; flex: none; }
      .title button { width: 28px; border: 0; border-right: 1px solid #556; background: #ffffff66; padding: 0; display: grid; place-items: center; }
      .title button:last-child { width: 47px; border: 0; background: linear-gradient(#e8a090, #c83820 50%, #d85838); }
      .body { flex: 1; display: flex; flex-direction: column; background: #f0f0f0; border: 1px solid #667; }
      .menu { display: flex; gap: 14px; padding: 0 5px; height: 20px; font: 12px/21px Roboto, sans-serif; background: linear-gradient(#fff, #e4e8f6 50%, #d4daee); flex: none; }
      .panes { display: grid; grid-template-columns: 211px 171px; gap: 8px; padding: 6px 5px 0 4px; }
      .bar { display: flex; align-items: center; height: 27px; border: 1px solid #a0a0a0; gap: 5px; padding: 0 2px; }
      .bar button { width: 22px; height: 22px; border: 0; padding: 0; display: grid; place-items: center; background: none; flex: none; }
      .bar .on { border: 1px solid #aaa; border-right-color: #fff; border-bottom-color: #fff; background: #f8f8f8; }
      .bar .thin { width: 16px; margin-left: -5px; }
      .bar hr { width: 1px; height: 18px; border: 0; background: #999; margin: 0; flex: none; }
      .bar output { background: #000; color: #0ff; font: bold 14px/18px "DejaVu Serif", serif; width: 82px; height: 18px; text-align: center; white-space: nowrap; flex: none; }
      .bar .tight { margin-right: -5px; width: 17px; }
      .view { display: flex; border-left: 1px solid #a0a0a0; border-right: 1px solid #a0a0a0; }
      .pane { border-right: 1px solid #fff; }
      .pane cw-calls { border-left: 1px solid #a0a0a0; }
      .text { height: 23px; margin: 8px 0 2px; background: #dff4ff; border: 1px solid #aaa; font: 17px/21px "Liberation Mono", monospace; padding-left: 1px; white-space: pre; overflow: hidden; flex: none; }
      .text i { font-style: normal; color: #999; }
      .text b { font-weight: normal; color: #00d; }
      .text u { text-decoration: none; color: #e00; }
      .text s { text-decoration: none; color: #f08080; }
      .status { display: flex; gap: 2px; height: 19px; font: 12px/17px Roboto, sans-serif; flex: none; }
      .status div { border: 1px solid; border-color: #aaa #fff #fff #aaa; display: flex; align-items: center; padding: 0 3px; white-space: nowrap; }
    `;
  }
  get html() {
    const radio = `<svg width="16" height="11"><rect width="16" height="11" fill="#888"/><path d="M0 .5h16M15.500 0v11M0 10.500h16" stroke="#222"/><circle cx="8" cy="6" r="3" fill="#111"/><path d="M2 3h3M2 7h1M12 3h2M12 7h2" stroke="#000" stroke-width="2"/><circle cx="8" cy="6" r="1" fill="#ccc"/></svg>`;
    return `
      <div class="title">
        <svg width="14" height="14"><rect x=".5" y=".5" width="13" height="13" fill="#088080" stroke="#eee"/><path d="M3 3h7M2 5h2M6 6h5M3 8h6M4 10h5" stroke="#0ff"/></svg>
        <span>CW Skimmer 2.1 - Registered to Ferruccio Falcone</span>
        <nav>
          <button aria-label="Minimize"><svg width="12" height="5"><rect x=".5" y=".5" width="11" height="4" fill="#fff" stroke="#445"/></svg></button>
          <button aria-label="Maximize"><svg width="12" height="10"><path d="M1 1h10v8H1zM4 4h4v2H4z" fill="#ddd" stroke="#999"/></svg></button>
          <button aria-label="Close"><svg width="12" height="10"><path d="M1 1h3l2 2 2-2h3L8 5l3 4H8L6 7 4 9H1l3-4z" fill="#fff" stroke="#445"/></svg></button>
        </nav>
      </div>
      <div class="body">
        <div class="menu"><a href="#">File</a><a href="#">View</a><a href="#">Commands</a><a href="#">Help</a></div>
        <div class="panes">
          <div>
            <div class="bar">
              <button class="on" aria-label="Radio">${radio}</button><hr>
              <button aria-label="Recorder"><svg width="16" height="12"><rect x=".5" y=".5" width="15" height="11" rx="2" fill="#eee" stroke="#222"/><path d="M3 3h10v4H3z" fill="#ccc" stroke="#444"/><circle cx="5" cy="5" r="1"/><circle cx="11" cy="5" r="1"/><path d="M4 9h8" stroke="#333"/></svg></button><hr>
              <button class="tight" aria-label="Audio"><svg width="12" height="16"><path d="M1 6l3-1 3-4v14l-3-4-3-1z" fill="#888" stroke="#222"/><ellipse cx="8" cy="8" rx="2.500" ry="7" fill="#bbb" stroke="#222"/><path d="M7 5l2 1M7 8h3M7 11l2-1" stroke="#222"/></svg></button>
              <button class="on tight" aria-label="Lock"><svg width="15" height="16"><path d="M4.500 1l4 4H6v9H3V5H1z" fill="#7ff" stroke="#00f"/><path d="M11 15l-4-4h2V2h3v9h2z" fill="#7ff" stroke="#00f"/></svg></button>
              <output>14001.08</output>
            </div>
            <div class="view"><cw-waterfall></cw-waterfall><cw-scale></cw-scale></div>
          </div>
          <div class="pane">
            <div class="bar">
              <button class="on" aria-label="Calls"><svg width="16" height="12"><path d="M4 3l3-2h8v10H7L4 9z" fill="#0cc" stroke="#066"/><path d="M7 4h7M7 6h7M7 8h7M9 2v8M12 2v8" stroke="#dff"/><path d="M0 6h5M1 4l3 2-3 2" stroke="#555" fill="none"/></svg></button>
              <button class="on thin" aria-label="More"><svg width="8" height="4"><path d="M0 0h8L4 4z"/></svg></button><hr>
              <button aria-label="Clear"><svg width="15" height="15"><path d="M1 2l3-1 4 4 3-5 3 1-4 6 4 5-3 2-4-5-4 6-3-1 4-7z" fill="#f00"/></svg></button><hr>
            </div>
            <cw-calls></cw-calls>
          </div>
        </div>
        <div class="text"><i>AET</i>P <b>»</b> <u>N1TD</u> 5N<i>T</i> <b>»</b> <i>R</i>I<i>M</i> <s>D5</s><u>NN</u> <b>»</b> TM<i>UP</i> <b>»</b></div>
        <div class="status">
          <div style="width: 19px; padding: 0">${radio}</div>
          <div style="width: 20px"><svg width="14" height="14"><path d="M3 12V3l2-2h4l2 2v9z" fill="#444"/><path d="M1 12h12v2H1z" fill="#111"/><path d="M5 3v8" stroke="#bbb"/></svg></div>
          <div style="width: 75px; justify-content: space-between"><svg width="26" height="15"><path d="M5 1h14v12H5z" fill="#555"/><path d="M3 3h18M3 6h18M3 9h18" stroke="#888" stroke-dasharray="2 1"/><path d="M10 13V9l2-2 2 2v4z" fill="#fff"/><path d="M0 13h26v2H0z" fill="#808000"/></svg>13%</div>
          <div style="width: 148px">Decoders: 62 of 62</div>
          <div style="flex: 1"></div>
          <div style="width: 40px">36 '<svg width="12" height="12"><path d="M0 12L12 0M4 12l8-8M8 12l4-4" stroke="#999"/></svg></div>
        </div>
      </div>`;
  }
}
customElements.define("cw-skimmer", CwSkimmer);
</script>
</body>
</html>
